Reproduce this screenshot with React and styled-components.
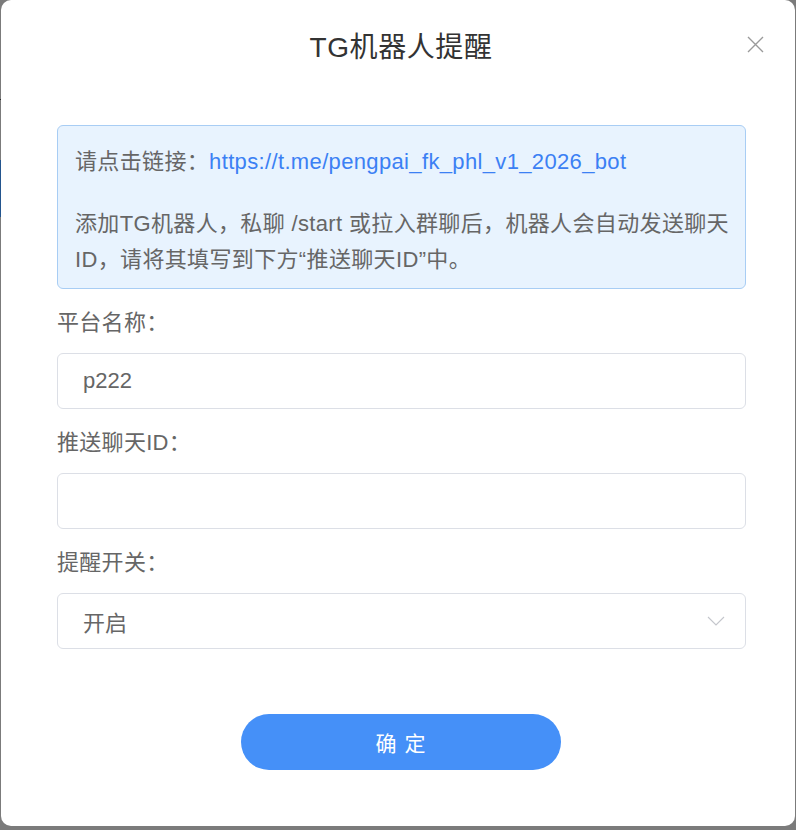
import React from 'react'
import styled, { createGlobalStyle } from 'styled-components';

const GlobalStyle = createGlobalStyle`
  html, body {
    margin: 0;
    padding: 0;
    background: #7b7b7b;
  }
  * {
    box-sizing: border-box;
  }
`;

const fields = [
  { label: '平台名称：', value: 'p222' },
  { label: '推送聊天ID：', value: '' },
];

function App() {
  return (
    <>
      <GlobalStyle />
      <Backdrop>
        <PageEdge>
          <EdgePart h={99} />
          <EdgeLine />
          <EdgePart h={60} />
          <EdgeBlue />
        </PageEdge>
        <Modal>
          <Header>
            <Title>TG机器人提醒</Title>
            <Close aria-label="close">
              <svg width="17" height="17" viewBox="0 0 17 17">
                <path d="M1 1 L16 16 M16 1 L1 16" stroke="#9a9a9a" strokeWidth="1.4" fill="none" />
              </svg>
            </Close>
          </Header>
          <Body>
            <Notice>
              <NoticeText>
                请点击链接：<NoticeLink href="#">https://t.me/pengpai_fk_phl_v1_2026_bot</NoticeLink>
              </NoticeText>
              <NoticeText>
                添加TG机器人，私聊 /start 或拉入群聊后，机器人会自动发送聊天<br />
                ID，请将其填写到下方“推送聊天ID”中。
              </NoticeText>
            </Notice>
            {fields.map(item => (
              <Field key={item.label}>
                <Label>{item.label}</Label>
                <Input defaultValue={item.value} />
              </Field>
            ))}
            <Field>
              <Label>提醒开关：</Label>
              <Select>
                <span>开启</span>
                <svg width="18" height="10" viewBox="0 0 18 10">
                  <path d="M1 1 L9 9 L17 1" stroke="#c4c6cc" strokeWidth="1.1" fill="none" />
                </svg>
              </Select>
            </Field>
          </Body>
          <Footer>
            <Confirm>确 定</Confirm>
          </Footer>
        </Modal>
      </Backdrop>
    </>
  )
}

export default App;

const Backdrop = styled.div`
  display: flex;
  width: 796px;
  height: 830px;
  overflow: hidden;
  background: #7b7b7b;
`;

const PageEdge = styled.div`
  width: 1px;
  flex: none;
  display: flex;
  flex-direction: column;
`;

const EdgePart = styled.div`
  height: ${p => p.h}px;
`;

const EdgeLine = styled.div`
  height: 1px;
  background: #2b2b2b;
`;

const EdgeBlue = styled.div`
  height: 57px;
  background: #23558e;
`;

const Modal = styled.div`
  position: relative;
  width: 794px;
  height: 826px;
  flex: none;
  background: #fff;
  border-radius: 10px;
  display: flex;
  flex-direction: column;
  font-family: "Liberation Sans", "Noto Sans CJK SC", sans-serif;
`;

const Header = styled.div`
  padding-top: 28px;
  text-align: center;
`;

const Title = styled.h2`
  margin: 0;
  font-size: 28px;
  line-height: 40px;
  letter-spacing: 0.6px;
  font-weight: normal;
  color: #333;
  padding-left: 6px;
`;

const Close = styled.button`
  position: absolute;
  top: 36px;
  right: 31px;
  width: 17px;
  height: 17px;
  padding: 0;
  border: none;
  background: none;
  display: flex;
`;

const Body = styled.div`
  margin-top: 57px;
  padding: 0 49px 0 56px;
`;

const Notice = styled.div`
  background: #e8f3fe;
  border: 1px solid #a8cdf4;
  border-radius: 6px;
  padding: 18px 17px 10px;
  display: flex;
  flex-direction: column;
  gap: 26px;
`;

const NoticeText = styled.p`
  margin: 0;
  font-size: 22px;
  line-height: 36px;
  letter-spacing: 0.35px;
  color: #666;
  white-space: nowrap;
`;

const NoticeLink = styled.a`
  color: #3b80f4;
  text-decoration: none;
`;

const Field = styled.div`
  margin-top: 16px;
`;

const Label = styled.div`
  font-size: 22px;
  line-height: 36px;
  letter-spacing: 0.3px;
  color: #666;
  margin-bottom: 12px;
`;

const Input = styled.input`
  display: block;
  width: 100%;
  height: 56px;
  border: 1px solid #dcdfe6;
  border-radius: 6px;
  padding: 0 25px;
  font-family: inherit;
  font-size: 22px;
  color: #666;
  outline: none;
`;

const Select = styled.div`
  height: 56px;
  border: 1px solid #dcdfe6;
  border-radius: 6px;
  padding: 0 20px 0 25px;
  display: flex;
  align-items: center;
  justify-content: space-between;
  font-size: 22px;
  color: #666;
`;

const Footer = styled.div`
  margin-top: 65px;
  display: flex;
  justify-content: center;
  padding-left: 6px;
`;

const Confirm = styled.button`
  width: 320px;
  height: 56px;
  border: none;
  border-radius: 28px;
  background: #4590f8;
  color: #fff;
  font-family: "Liberation Sans", "Noto Sans CJK SC", sans-serif;
  font-size: 21px;
  letter-spacing: 1px;
`;
